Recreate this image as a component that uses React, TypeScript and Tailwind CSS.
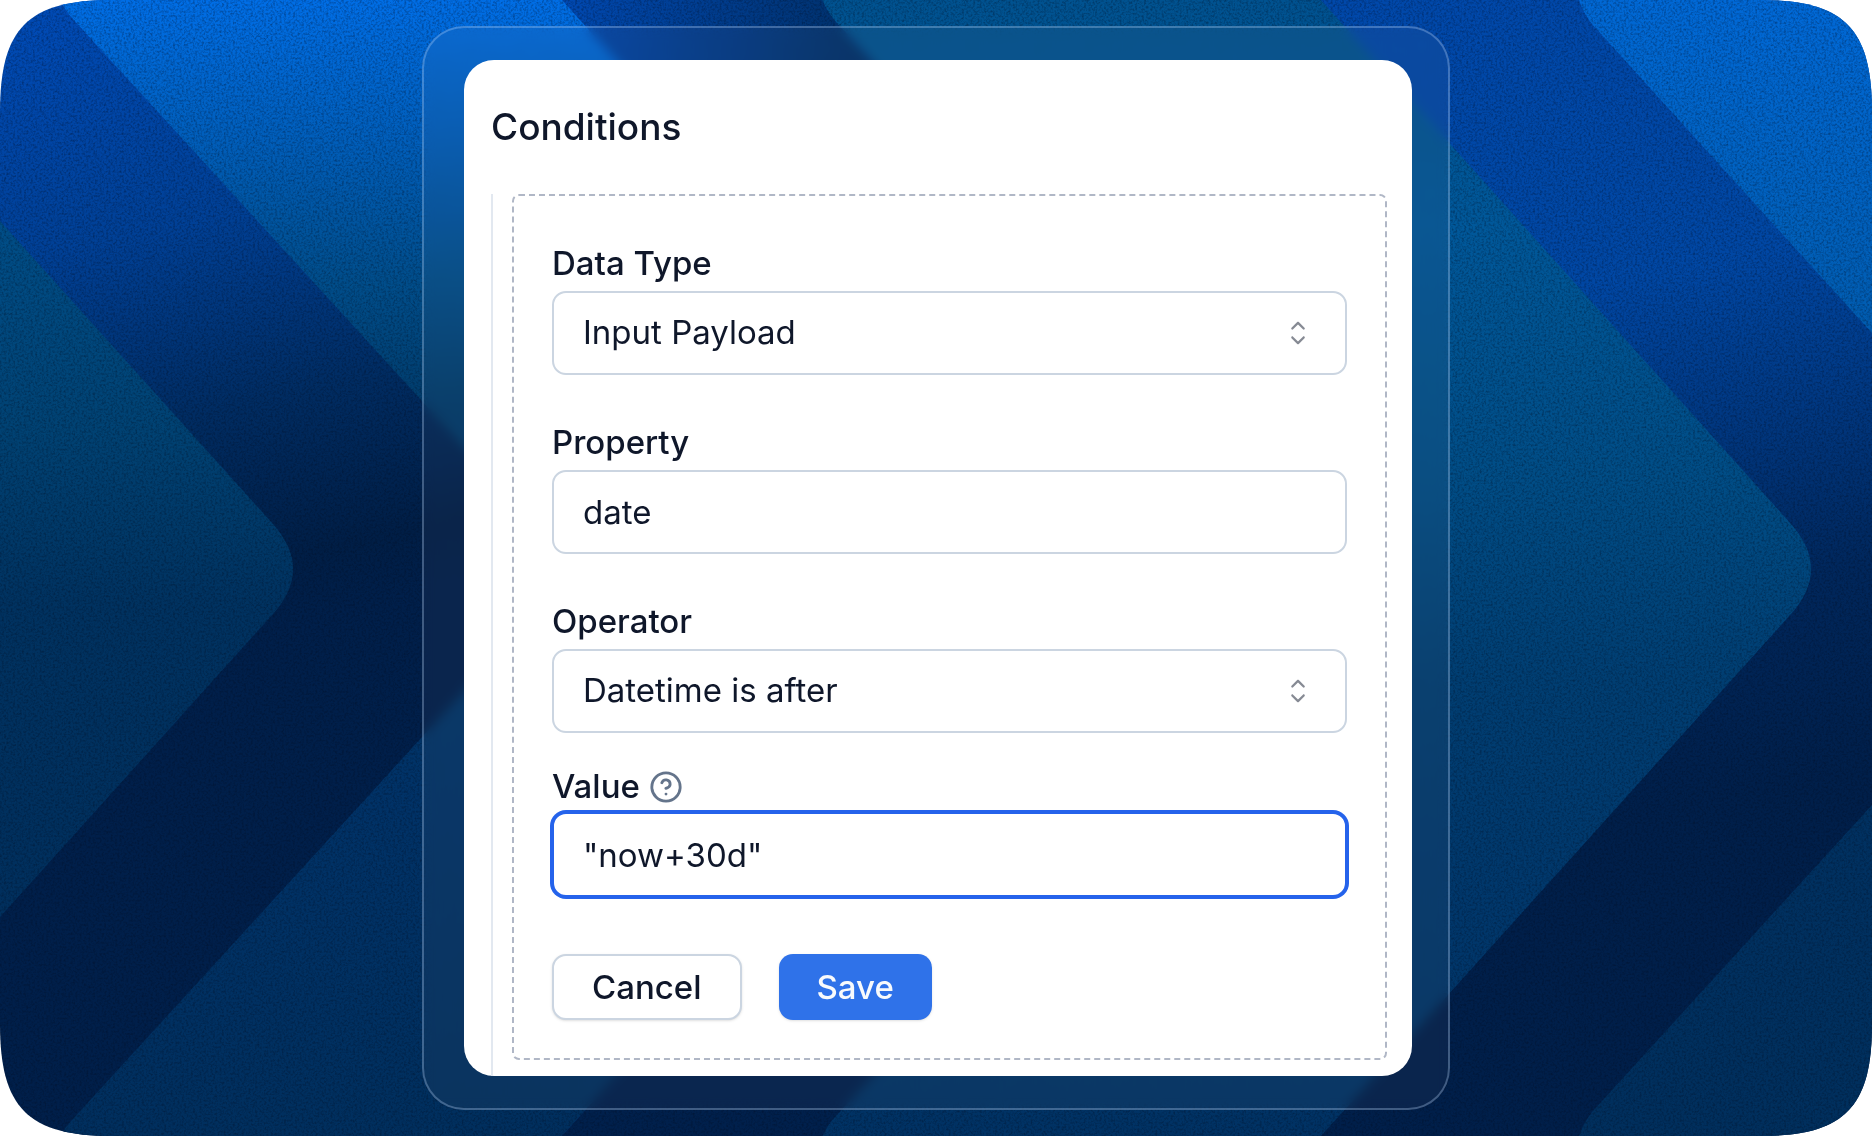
import React from 'react';
import { CircleHelp } from 'lucide-react';
import { RxCaretSort } from 'react-icons/rx';

const fieldClass =
  'block h-[84px] w-full appearance-none rounded-[14px] border-2 border-[#cbd5e1] bg-white px-[29px] text-[33px] text-[#0f172a] outline-none';

const Backdrop: React.FC = () => (
  <svg
    className="absolute inset-0 h-full w-full"
    viewBox="0 0 1872 1136"
    preserveAspectRatio="none"
    aria-hidden="true"
  >
    <defs>
      <clipPath id="frame">
        <path d="M0 112C0 28 28 0 112 0H1760C1844 0 1872 28 1872 112V1024C1872 1108 1844 1136 1760 1136H112C28 1136 0 1108 0 1024Z" />
      </clipPath>
      <linearGradient id="band-left" gradientUnits="userSpaceOnUse" x1="160" y1="0" x2="300" y2="620">
        <stop offset="0" stopColor="#004ab4" />
        <stop offset="0.35" stopColor="#004096" />
        <stop offset="0.65" stopColor="#002c62" />
        <stop offset="0.9" stopColor="#001e46" />
        <stop offset="1" stopColor="#001f4a" />
      </linearGradient>
      <linearGradient id="band-mid" gradientUnits="userSpaceOnUse" x1="570" y1="0" x2="850" y2="60">
        <stop offset="0" stopColor="#0048b0" />
        <stop offset="1" stopColor="#00306a" />
      </linearGradient>
      <linearGradient id="band-right" gradientUnits="userSpaceOnUse" x1="1560" y1="0" x2="1700" y2="800">
        <stop offset="0" stopColor="#0048aa" />
        <stop offset="0.35" stopColor="#0047a4" />
        <stop offset="0.55" stopColor="#003780" />
        <stop offset="0.75" stopColor="#00275c" />
        <stop offset="1" stopColor="#001f4a" />
      </linearGradient>
      <linearGradient id="arrow-left" gradientUnits="userSpaceOnUse" x1="0" y1="220" x2="0" y2="920">
        <stop offset="0" stopColor="#004e88" />
        <stop offset="0.3" stopColor="#004273" />
        <stop offset="0.55" stopColor="#003260" />
        <stop offset="1" stopColor="#002f5d" />
      </linearGradient>
      <linearGradient id="arrow-mid" gradientUnits="userSpaceOnUse" x1="350" y1="0" x2="350" y2="1136">
        <stop offset="0" stopColor="#006ee6" />
        <stop offset="0.13" stopColor="#005db8" />
        <stop offset="0.25" stopColor="#004d8a" />
        <stop offset="0.36" stopColor="#003b6a" />
        <stop offset="0.7" stopColor="#003267" />
        <stop offset="1" stopColor="#002f5e" />
      </linearGradient>
      <linearGradient id="arrow-right" gradientUnits="userSpaceOnUse" x1="1500" y1="0" x2="1500" y2="1136">
        <stop offset="0" stopColor="#005290" />
        <stop offset="0.2" stopColor="#00589a" />
        <stop offset="0.42" stopColor="#004d86" />
        <stop offset="0.6" stopColor="#003e72" />
        <stop offset="0.8" stopColor="#00376b" />
        <stop offset="1" stopColor="#003264" />
      </linearGradient>
      <linearGradient id="arrow-edge" gradientUnits="userSpaceOnUse" x1="1850" y1="0" x2="1750" y2="1136">
        <stop offset="0" stopColor="#0069d8" />
        <stop offset="0.28" stopColor="#005cb0" />
        <stop offset="0.7" stopColor="#003161" />
        <stop offset="1" stopColor="#002f5d" />
      </linearGradient>
      <filter id="grain" x="0" y="0" width="100%" height="100%" colorInterpolationFilters="sRGB">
        <feTurbulence type="fractalNoise" baseFrequency="0.45" numOctaves="2" seed="4" />
        <feColorMatrix values="0 0 0 0 0  0 0 0 0 0.04  0 0 0 0 0.12  0.8 0 0 0 -0.32" />
      </filter>
    </defs>
    <g clipPath="url(#frame)">
      <rect width="700" height="1136" fill="url(#band-left)" />
      <path d="M0 221L273 524Q313 569 273 614L0 917Z" fill="url(#arrow-left)" />
      <path
        d="M56 -20Q58 2 72 18L540 530Q572 569 540 608L72 1120Q58 1134 56 1156H900V-20Z"
        fill="url(#arrow-mid)"
      />
      <path d="M544 -20L1032 524Q1072 569 1032 614L544 1156H1400V-20Z" fill="url(#band-mid)" />
      <path d="M544 1156L900 760H1400V1156Z" fill="#00204c" />
      <path d="M1100 -20H1900V1156H1100Z" fill="url(#band-right)" />
      <path
        d="M816 -20Q822 6 836 22L1100 309V829L836 1116Q822 1130 816 1156H1303L1791 614Q1831 569 1791 524L1303 -20Z"
        fill="url(#arrow-right)"
      />
      <path
        d="M1574 -20Q1578 6 1592 24L1872 333V-20ZM1872 805L1592 1112Q1578 1130 1574 1156H1872Z"
        fill="url(#arrow-edge)"
      />
      <rect width="1872" height="1136" filter="url(#grain)" />
    </g>
  </svg>
);

interface FieldProps {
  id: string;
  label: string;
  children: React.ReactNode;
}

const Field: React.FC<FieldProps> = ({ id, label, children }) => (
  <div className="flex flex-col gap-[11px]">
    <label htmlFor={id} className="text-[33px] leading-[33px] font-medium">
      {label}
    </label>
    {children}
  </div>
);

const SelectBox: React.FC<{ id: string; options: string[] }> = ({ id, options }) => (
  <div className="relative">
    <select id={id} className={fieldClass}>
      {options.map((option) => (
        <option key={option}>{option}</option>
      ))}
    </select>
    <RxCaretSort className="pointer-events-none absolute inset-y-0 right-[30px] my-auto size-[38px] opacity-50" />
  </div>
);

export default function App() {
  return (
    <main className="relative flex min-h-screen items-center justify-center bg-white p-[26px] font-['Inter',sans-serif] text-[#0f172a]">
      <Backdrop />

      <div className="relative w-full max-w-[1028px] rounded-[42px] border-2 border-blue-200/30 bg-white/4 py-8 pr-9 pl-10 backdrop-blur-[6px]">
        <section className="overflow-hidden rounded-[30px] bg-white pt-[45px] pr-[25px] pl-[27px]">
          <h1 className="mb-[45px] text-[37px] leading-[44px] font-medium">Conditions</h1>

          <div className="border-l-2 border-[#e2e8f0] pb-4 pl-[19px]">
            <form
              className="rounded-[7px] border-2 border-dashed border-[#b0b7c6] px-[38px] pt-[51px] pb-[38px]"
              onSubmit={(e) => e.preventDefault()}
            >
              <div className="flex flex-col gap-[51px]">
                <Field id="data-type" label="Data Type">
                  <SelectBox id="data-type" options={['Input Payload']} />
                </Field>
                <Field id="property" label="Property">
                  <input id="property" type="text" defaultValue="date" className={fieldClass} />
                </Field>
                <Field id="operator" label="Operator">
                  <SelectBox id="operator" options={['Datetime is after']} />
                </Field>
              </div>

              <div className="mt-[37px] mb-[57px] flex flex-col gap-[9px]">
                <div className="flex h-[33px] items-center gap-[9px]">
                  <label htmlFor="value" className="text-[33px] leading-[33px] font-medium">
                    Value
                  </label>
                  <CircleHelp className="size-[34px] text-[#64748b]" />
                </div>
                <input
                  id="value"
                  type="text"
                  defaultValue={'"now+30d"'}
                  className="block h-[85px] w-full rounded-[14px] border-2 border-[#2563eb] bg-white px-[29px] text-[33px] ring-2 ring-[#2563eb] outline-none"
                />
              </div>

              <div className="flex gap-[37px]">
                <button
                  type="button"
                  className="h-[66px] rounded-[14px] border-2 border-[#cbd5e1] bg-white px-[38px] text-[33px] leading-[33px] font-medium shadow-sm"
                >
                  Cancel
                </button>
                <button
                  type="submit"
                  className="h-[66px] rounded-[14px] bg-[#2f72e9] px-[38px] text-[33px] leading-[33px] font-medium text-slate-50 shadow-sm"
                >
                  Save
                </button>
              </div>
            </form>
          </div>
        </section>
      </div>
    </main>
  );
}
